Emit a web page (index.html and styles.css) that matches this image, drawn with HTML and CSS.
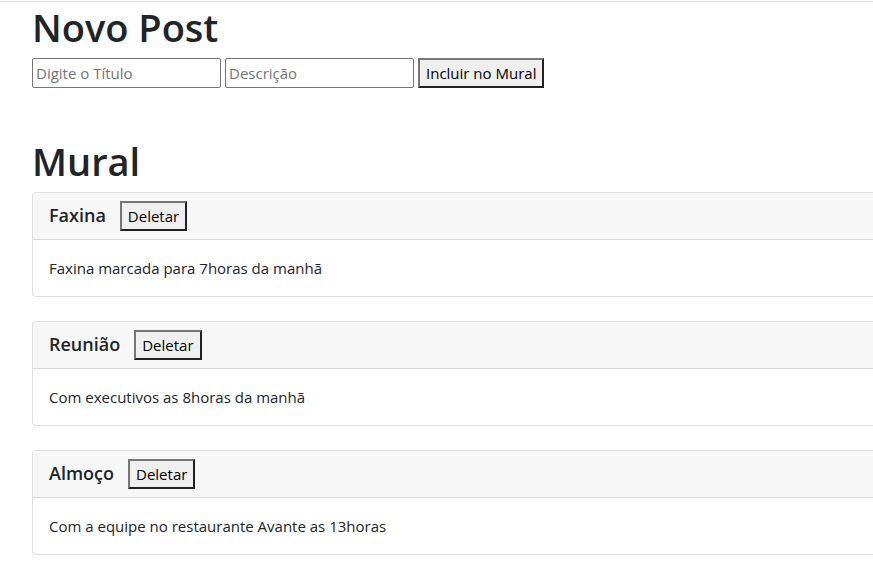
FILE: index.html
```html
<!DOCTYPE html>
<html lang="pt-BR">
<head>
<meta charset="utf-8">
<title>Mural</title>
<link rel="stylesheet" href="styles.css">
</head>
<body>
<main class="page">
  <section class="new-post">
    <h1>Novo Post</h1>
    <form class="post-form">
      <input type="text" aria-label="Título" placeholder="Digite o Título">
      <input type="text" aria-label="Descrição" placeholder="Descrição">
      <button type="button">Incluir no Mural</button>
    </form>
  </section>
  <section class="board">
    <h1>Mural</h1>
    <div class="cards">
      <article class="card">
        <header class="card-header"><h2>Faxina</h2><button type="button">Deletar</button></header>
        <p class="card-body">Faxina marcada para 7horas da manhã</p>
      </article>
      <article class="card">
        <header class="card-header"><h2>Reunião</h2><button type="button">Deletar</button></header>
        <p class="card-body">Com executivos as 8horas da manhã</p>
      </article>
      <article class="card">
        <header class="card-header"><h2>Almoço</h2><button type="button">Deletar</button></header>
        <p class="card-body">Com a equipe no restaurante Avante as 13horas</p>
      </article>
    </div>
  </section>
</main>
</body>
</html>
```
FILE: styles.css
```css
* { box-sizing: border-box; }
body {
  margin: 0;
  background: #fff;
  color: #212529;
  font: 400 15px/24px "Segoe UI", "Open Sans", "Noto Sans", sans-serif;
}
.page {
  border-top: 1px solid #dadcde;
  padding: 2px 0 24px 32px;
  margin-top: 1px;
}
h1, h2, p { margin: 0; }
h1 { font-size: 38px; line-height: 46px; font-weight: 600; }
h2 { font-size: 18px; line-height: 22px; padding-bottom: 2px; font-weight: 600; }
input, button { font: inherit; height: 30px; }
input {
  width: 189px;
  padding: 1px 3px;
  border: 1px solid #767676;
  border-radius: 2px;
  background: #fff;
}
input::placeholder { color: #757575; }
button {
  padding: 1px 6px;
  border: 2px solid;
  border-color: #767676 #212121 #212121 #767676;
  border-radius: 0;
  background: #efefef;
  color: #000;
  white-space: nowrap;
}
.post-form { display: flex; gap: 4px; padding-top: 8px; }
.board { padding-top: 50px; }
.cards { display: grid; gap: 24px; padding-top: 8px; }
.card {
  border: 1px solid #dfdfdf;
  border-right: 0;
  border-radius: 4px 0 0 4px;
  overflow: hidden;
}
.card-header {
  display: flex;
  align-items: center;
  gap: 14px;
  padding: 8px 16px;
  background: #f7f7f7;
  border-bottom: 1px solid #d8d8d8;
}
.card-body { padding: 16px; }
```
